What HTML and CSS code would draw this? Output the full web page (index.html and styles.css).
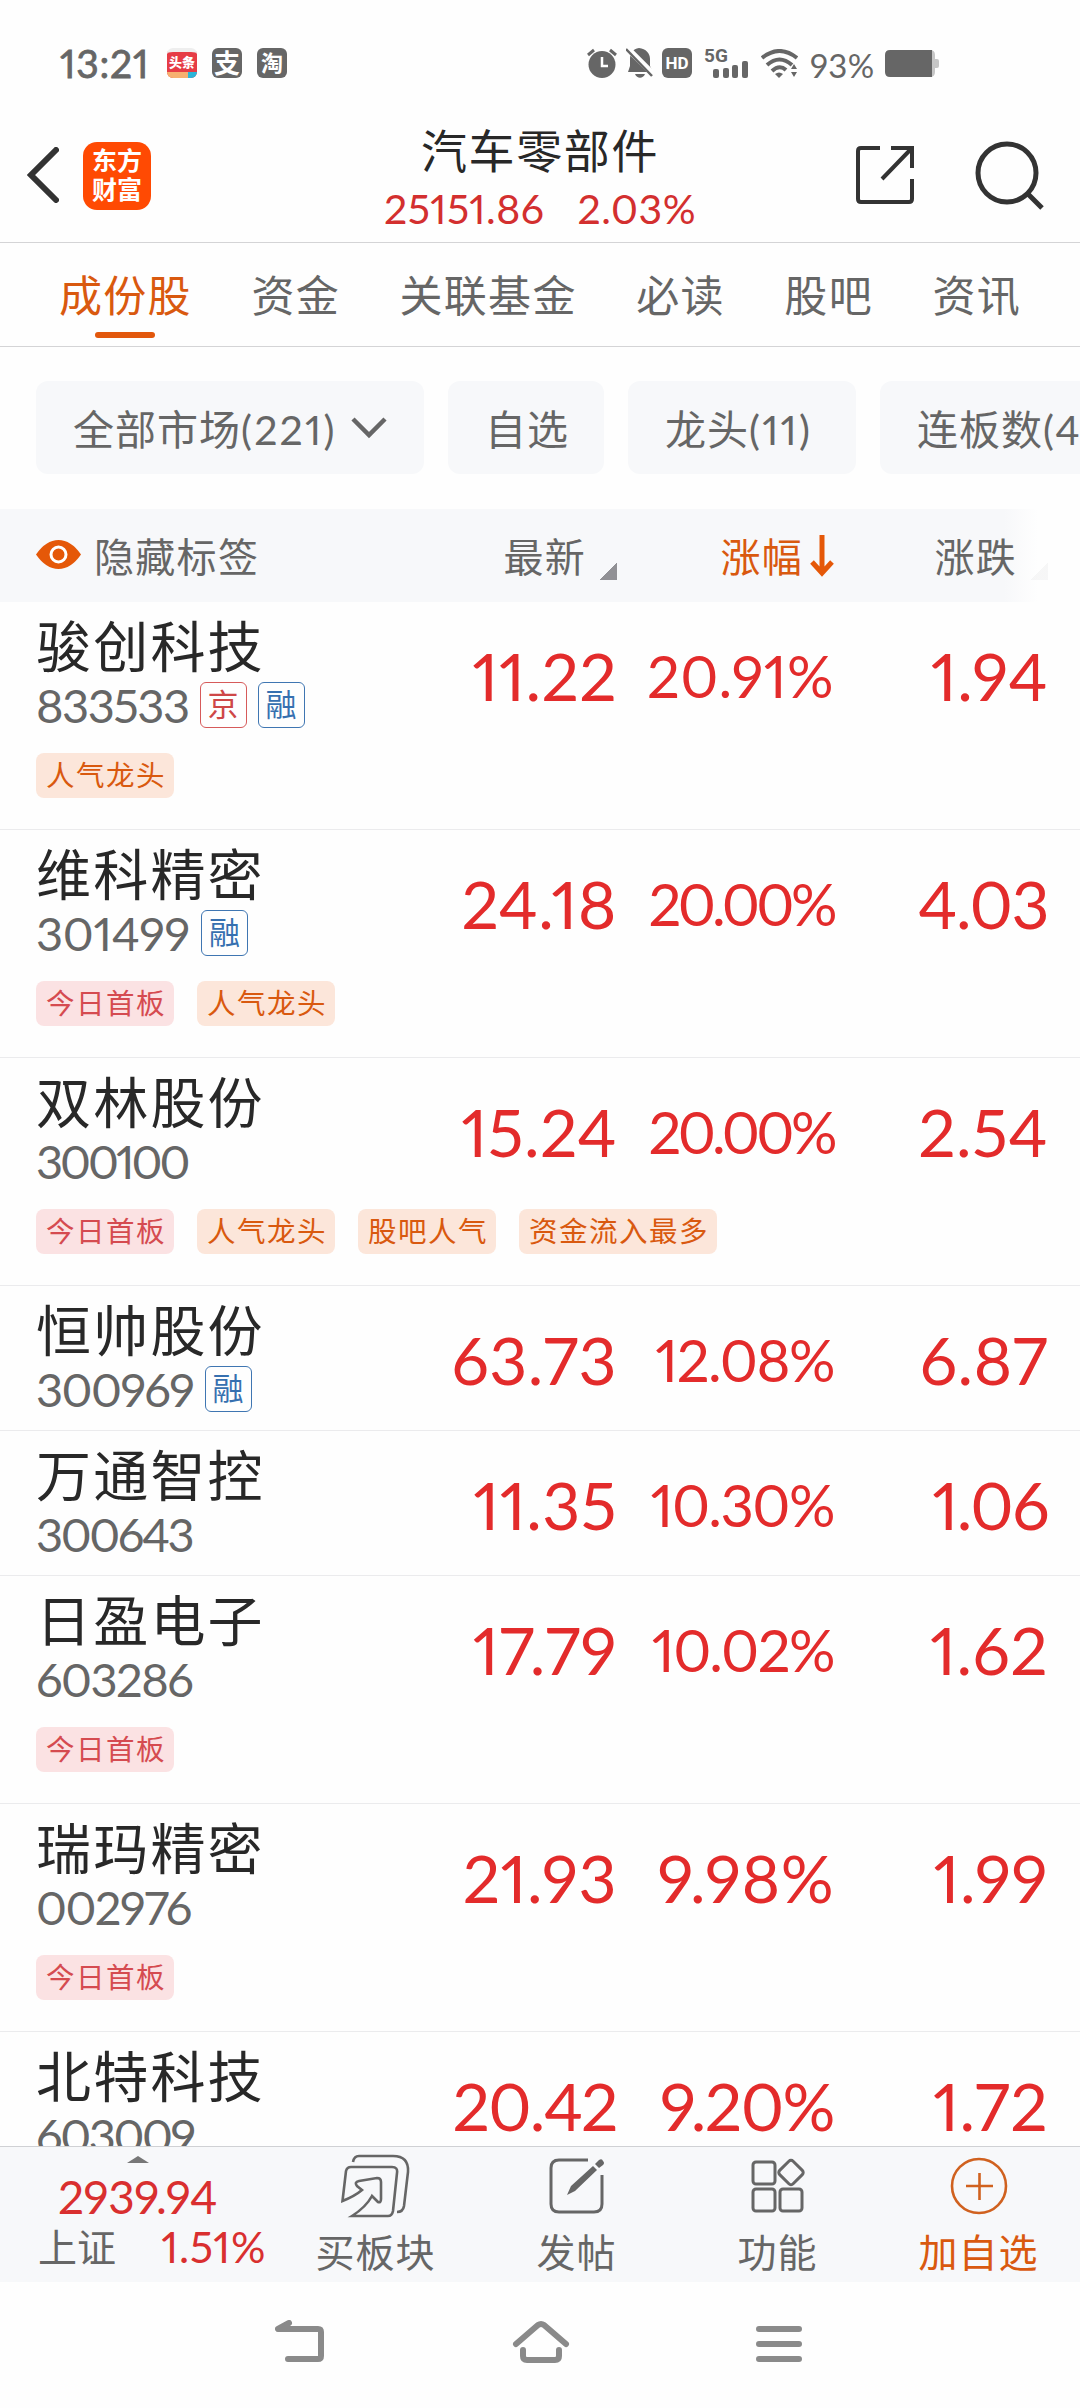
FILE: index.html
```html
<!DOCTYPE html>
<html lang="zh-CN">
<head>
  <meta charset="UTF-8">
  <title>汽车零部件</title>
  <link rel="stylesheet" href="styles.css">
</head>
<body>

  <div class="status-bar">
    <span class="time">13:21</span>
    <span class="app-icon toutiao"><b>头条</b><i></i></span>
    <span class="app-icon">支</span>
    <span class="app-icon small">淘</span>
    <div class="status-right">
      <svg class="alarm" width="30" height="30" viewBox="0 0 30 30">
        <circle cx="15" cy="16.500" r="13.500" fill="#666"/>
        <path d="M1 7L7 2M29 7L23 2" stroke="#666" stroke-width="3"/>
        <path d="M15 9v9h6" fill="none" stroke="#fff" stroke-width="2.500"/>
      </svg>
      <svg class="bell" width="27" height="30" viewBox="0 0 27 30">
        <path d="M13 0c7 1 11 5 11 11v7l3 6H2l2-6v-7C4 5 7 1 13 0zM9 26h10c-2 5-8 5-10 0z" fill="#666"/>
        <path d="M1 0L28 27" stroke="#fff" stroke-width="6"/>
        <path d="M0 1L26 28" stroke="#666" stroke-width="2.500"/>
      </svg>
      <span class="hd">HD</span>
      <div class="signal">
        <span>5G</span>
        <svg width="36" height="17" viewBox="0 0 36 17" fill="#666">
          <rect x="0" y="8" width="6" height="9" rx="2"/>
          <rect x="10" y="7" width="6" height="10" rx="2"/>
          <rect x="19" y="4" width="6" height="13" rx="2"/>
          <rect x="29" y="0" width="6" height="17" rx="2"/>
        </svg>
      </div>
      <svg class="wifi" width="37" height="29" viewBox="0 0 37 29">
        <path d="M1 9Q18.500-5 36 9M6 16Q18.500 5 31 16M11 22Q18.500 15 25 21" fill="none" stroke="#666" stroke-width="4"/>
        <path d="M14 25q4-3 8 0l-4 4zM30 20l3-5 3 5zM30 23h6l-3 5z" fill="#666"/>
      </svg>
      <span class="percent">93%</span>
      <svg class="battery" width="54" height="27" viewBox="0 0 54 27">
        <path d="M44 0h1q5 0 5 5v4h2q2 0 2 2v5q0 2-2 2h-2v4q0 5-5 5h-1z" fill="#c6c6c6"/>
        <path d="M5 0h42v27H5q-5 0-5-5V5q0-5 5-5z" fill="#666"/>
      </svg>
    </div>
  </div>

  <div class="header">
    <svg class="back" width="32" height="56" viewBox="0 0 32 56">
      <path d="M29 3L4 28l25 25" fill="none" stroke="#333" stroke-width="6" stroke-linecap="round"/>
    </svg>
    <div class="logo">东方<br>财富</div>
    <div class="title">
      <h1>汽车零部件</h1>
      <p><span>25151.86</span><span>2.03%</span></p>
    </div>
    <svg class="share" width="58" height="58" viewBox="0 0 58 58" fill="none" stroke="#333" stroke-width="4">
      <path d="M24 2H5Q2 2 2 5v48q0 3 3 3h48q3 0 3-3V33M35 2h21v20M56 2L26 33"/>
    </svg>
    <svg class="search" width="70" height="70" viewBox="0 0 70 70" fill="none" stroke="#333">
      <circle cx="32" cy="32" r="29" stroke-width="5"/>
      <path d="M52 52L67 67" stroke-width="5"/>
    </svg>
  </div>

  <div class="tabs">
    <span class="active">成份股</span>
    <span>资金</span>
    <span>关联基金</span>
    <span>必读</span>
    <span>股吧</span>
    <span>资讯</span>
  </div>

  <div class="filters">
    <div class="filter market">全部市场<em>(221)</em>
      <svg width="36" height="22" viewBox="0 0 36 22"><path d="M2 2l16 16L34 2" fill="none" stroke="#666" stroke-width="4.500"/></svg>
    </div>
    <div class="filter own">自选</div>
    <div class="filter leader">龙头<em>(11)</em></div>
    <div class="filter streak">连板数<em>(4)</em></div>
  </div>

  <div class="row table-head">
    <div class="toggle">
      <svg width="45" height="29" viewBox="0 0 45 29">
        <path d="M0 14.500Q10 0 22.500 0T45 14.500Q35 29 22.500 29T0 14.500z" fill="#e55808"/>
        <circle cx="22.500" cy="14.500" r="7.500" fill="#e55808" stroke="#fff" stroke-width="3"/>
      </svg>
      隐藏标签
    </div>
    <div class="latest">最新<i class="corner"></i></div>
    <div class="sorted">涨幅
      <svg width="24" height="42" viewBox="0 0 24 42"><path d="M12 0v37M2 27l10 11 10-11" fill="none" stroke="#e55808" stroke-width="5"/></svg>
    </div>
    <div class="change">涨跌<i class="corner"></i></div>
  </div>

  <div class="stocks">
    <div class="row stock tagged">
      <div class="info">
        <h2>骏创科技</h2>
        <div class="code">833533<span class="mark red">京</span><span class="mark">融</span></div>
        <div class="tags"><span>人气龙头</span></div>
      </div>
      <div class="num">11.22</div><div class="num long">20.91%</div><div class="num">1.94</div>
    </div>
    <div class="row stock tagged">
      <div class="info">
        <h2>维科精密</h2>
        <div class="code wide">301499<span class="mark">融</span></div>
        <div class="tags"><span class="pink">今日首板</span><span>人气龙头</span></div>
      </div>
      <div class="num">24.18</div><div class="num long tight">20.00%</div><div class="num snug">4.03</div>
    </div>
    <div class="row stock tagged">
      <div class="info">
        <h2>双林股份</h2>
        <div class="code tight">300100</div>
        <div class="tags"><span class="pink">今日首板</span><span>人气龙头</span><span>股吧人气</span><span>资金流入最多</span></div>
      </div>
      <div class="num">15.24</div><div class="num long tight">20.00%</div><div class="num">2.54</div>
    </div>
    <div class="row stock">
      <div class="info">
        <h2>恒帅股份</h2>
        <div class="code">300969<span class="mark">融</span></div>
      </div>
      <div class="num">63.73</div><div class="num long snug">12.08%</div><div class="num">6.87</div>
    </div>
    <div class="row stock">
      <div class="info">
        <h2>万通智控</h2>
        <div class="code snug">300643</div>
      </div>
      <div class="num">11.35</div><div class="num long snug">10.30%</div><div class="num snug">1.06</div>
    </div>
    <div class="row stock tagged">
      <div class="info">
        <h2>日盈电子</h2>
        <div class="code">603286</div>
        <div class="tags"><span class="pink">今日首板</span></div>
      </div>
      <div class="num">17.79</div><div class="num long snug">10.02%</div><div class="num">1.62</div>
    </div>
    <div class="row stock tagged">
      <div class="info">
        <h2>瑞玛精密</h2>
        <div class="code">002976</div>
        <div class="tags"><span class="pink">今日首板</span></div>
      </div>
      <div class="num">21.93</div><div class="num">9.98%</div><div class="num">1.99</div>
    </div>
    <div class="row stock tagged">
      <div class="info">
        <h2>北特科技</h2>
        <div class="code snug">603009</div>
      </div>
      <div class="num snug">20.42</div><div class="num snug">9.20%</div><div class="num">1.72</div>
    </div>
  </div>

  <div class="toolbar">
    <div class="index">
      <i class="up"></i>
      <div class="point">2939.94</div>
      <div class="index-row"><span>上证</span><b>1.51%</b></div>
    </div>
    <div class="tool">
      <svg width="70" height="64" viewBox="0 0 70 64" fill="none" stroke="#666" stroke-width="2.600">
        <path d="M12 8q1-6 6-6h34q16 0 15 16l-4 34q-1 6-7 6"/>
        <path d="M1.500 47L5 17q1-4 5-4h41q6 0 5 6l-4 38q-1 5-5 5H11q14-9 20-20l6 6q3 1 3-3V28q0-4-4-4l-18 3q-5 1-2 5l5 4Q14 42 1.500 47z"/>
      </svg>
      买板块
    </div>
    <div class="tool">
      <svg width="56" height="64" viewBox="0 0 56 64">
        <path d="M39 6H10q-8 0-8 8v36q0 8 8 8h35q8 0 8-8V21" fill="none" stroke="#666" stroke-width="3"/>
        <path d="M18 41l4-9 22-20 4 4-22 21zM46 10l4-4q3-2 4 1 2 2 0 4l-4 3z" fill="#666"/>
      </svg>
      发帖
    </div>
    <div class="tool">
      <svg width="54" height="64" viewBox="0 0 54 64" fill="none" stroke="#666" stroke-width="3">
        <rect x="2" y="8" width="22" height="22" rx="3"/>
        <rect x="2" y="35" width="22" height="22" rx="3"/>
        <rect x="29" y="35" width="22" height="22" rx="3"/>
        <rect x="30.500" y="9" width="19" height="19" rx="3" transform="rotate(45 40 18.500)"/>
      </svg>
      功能
    </div>
    <div class="tool add">
      <svg width="58" height="64" viewBox="0 0 58 64" fill="none" stroke="#d0611f" stroke-width="2.600">
        <circle cx="29" cy="32" r="27"/>
        <path d="M16 32h27M29.500 19v27"/>
      </svg>
      加自选
    </div>
  </div>

  <div class="nav">
    <svg width="50" height="44" viewBox="0 0 50 44" fill="none" stroke="#8a8a8a" stroke-width="6" stroke-linecap="round" stroke-linejoin="round">
      <path d="M14 3L3 9h40q3 0 3 3v24q0 3-3 3H13"/>
    </svg>
    <svg width="58" height="46" viewBox="0 0 58 46" fill="none" stroke="#8a8a8a" stroke-width="6" stroke-linecap="round" stroke-linejoin="round">
      <path d="M4 24L26 5q3-2 6 0l22 19M11 30v6q0 4 4 4h28q4 0 4-4v-6"/>
    </svg>
    <svg width="46" height="44" viewBox="0 0 46 44" stroke="#8a8a8a" stroke-width="6" stroke-linecap="round">
      <path d="M3 9h40M3 24h40M3 39h40"/>
    </svg>
  </div>

</body>
</html>
```
FILE: styles.css
```css
* {
  box-sizing: border-box;
}
body {
  margin: 0;
  width: 1080px;
  height: 2408px;
  overflow: hidden;
  display: flex;
  flex-direction: column;
  font-family: Lato, "Noto Sans CJK SC", sans-serif;
  font-variant-numeric: proportional-nums;
  background: #fefefe;
  color: #666;
}
h1, h2, p {
  margin: 0;
  font-weight: normal;
}
i, em {
  font-style: normal;
}
svg {
  display: block;
  flex: none;
}

/* status bar */
.status-bar {
  height: 108px;
  padding: 18px 141px 0 60px;
  display: flex;
  align-items: center;
}
.time {
  width: 107px;
  font-size: 39px;
  letter-spacing: 0.8px;
  -webkit-text-stroke: 0.8px #666;
}
.app-icon {
  width: 30px;
  height: 30px;
  margin-right: 15px;
  border-radius: 6px;
  background: #666;
  color: #fff;
  font-size: 26px;
  font-weight: bold;
  line-height: 30px;
  text-align: center;
}
.app-icon.small {
  font-size: 22px;
}
.app-icon.toutiao {
  display: flex;
  flex-direction: column;
  background: #e63c46;
  border-top: 4px solid #eee;
}
.toutiao b {
  height: 20px;
  font-size: 13px;
  line-height: 20px;
}
.toutiao i {
  height: 6px;
  border-radius: 0 0 6px 6px;
  background: linear-gradient(90deg, #f6b070 70%, #2bb5d8 70%);
}
.status-right {
  margin-left: auto;
  display: flex;
  align-items: center;
}
.bell {
  margin-left: 9px;
}
.hd {
  width: 30px;
  height: 30px;
  margin-left: 9px;
  border-radius: 6px;
  background: #666;
  color: #fff;
  font: bold 17px/30px Roboto, sans-serif;
  text-align: center;
}
.signal {
  width: 45px;
  height: 30px;
  margin-left: 12px;
  font: bold 19px/15px Roboto, sans-serif;
}
.signal span {
  display: block;
  height: 13px;
}
.signal svg {
  margin-left: 9px;
}
.wifi {
  margin-left: 12px;
}
.percent {
  width: 87px;
  padding: 3px 0 0 12px;
  font-size: 33px;
  letter-spacing: 0.3px;
  white-space: nowrap;
}

/* header */
.header {
  height: 135px;
  padding: 0 34px 0 27px;
  display: flex;
  border-bottom: 1px solid #d4d4d6;
}
.back {
  margin-top: 39px;
}
.logo {
  width: 68px;
  height: 68px;
  margin: 34px 0 0 24px;
  padding-top: 4px;
  border-radius: 14px;
  background: #ff4a03;
  color: #fff;
  font-size: 25px;
  font-weight: bold;
  line-height: 29px;
  text-align: center;
}
.title {
  width: 400px;
  margin-left: 189px;
  text-align: center;
}
.title h1 {
  margin-top: 13px;
  font-size: 46px;
  line-height: 60px;
  letter-spacing: 1.6px;
  color: #282828;
}
.title p {
  display: flex;
  justify-content: center;
  gap: 33px;
  font-size: 41px;
  line-height: 56px;
  letter-spacing: 0.5px;
  color: #d32f2f;
}
.share {
  margin: 38px 0 0 116px;
}
.search {
  margin: 33px 0 0 61px;
}

/* tabs */
.tabs {
  height: 104px;
  padding-left: 59px;
  display: flex;
  gap: 59.5px;
  border-bottom: 1px solid #d4d4d6;
  font-size: 43px;
  line-height: 106px;
  letter-spacing: 1.3px;
}
.tabs .active {
  display: flex;
  flex-direction: column;
  align-items: center;
  color: #d9590f;
}
.tabs .active::after {
  content: "";
  width: 60px;
  height: 6px;
  margin-top: -17px;
  border-radius: 3px;
  background: #e2570c;
}

/* filters */
.filters {
  height: 162px;
  padding: 34px 0 0 36px;
  display: flex;
  gap: 24px;
  white-space: nowrap;
}
.filter {
  flex: none;
  display: flex;
  height: 93px;
  padding-left: 37px;
  border-radius: 12px;
  background: #f7f8fa;
  font-size: 41px;
  line-height: 97px;
  letter-spacing: 1px;
}
.filter em {
  letter-spacing: 2.2px;
}
.filter svg {
  margin: 36px 0 0 14px;
}
.market {
  width: 388px;
}
.own {
  width: 156px;
}
.leader {
  width: 228px;
}
.streak {
  width: 250px;
}

/* stock table */
.row {
  display: grid;
  grid-template-columns: 380px 237px 217px 214px;
}
.table-head {
  flex: none;
  height: 93px;
  background: linear-gradient(90deg, #f7f8fa 1004px, #fefefe 1038px);
  font-size: 40px;
  line-height: 97px;
  letter-spacing: 1.3px;
}
.toggle {
  padding-left: 36px;
  display: flex;
  gap: 13px;
}
.toggle svg {
  margin-top: 31px;
}
.latest, .sorted, .change {
  display: flex;
  justify-content: flex-end;
}
.sorted {
  gap: 7px;
  color: #d9590f;
}
.sorted svg {
  margin-top: 26px;
}
.corner {
  width: 18px;
  height: 18px;
  margin: 53px 0 0 13px;
  background: linear-gradient(135deg, transparent 50%, #919195 50%);
}
.change .corner {
  opacity: 0.07;
}
.stocks {
  flex: none;
  height: 1544px;
  overflow: hidden;
}
.stock {
  height: 145px;
  border-bottom: 1px solid #ebebed;
}
.stock.tagged {
  height: 228px;
}
.info {
  padding: 7px 0 0 36px;
  white-space: nowrap;
}
.info h2 {
  height: 74px;
  font-size: 55px;
  line-height: 74px;
  letter-spacing: 2.2px;
  color: #282828;
}
.code {
  display: flex;
  align-items: center;
  height: 46px;
  margin-top: -1px;
  font-size: 47px;
  letter-spacing: -1.5px;
}
.code.wide {
  letter-spacing: -0.3px;
}
.code.snug {
  letter-spacing: -2.4px;
}
.code.tight {
  letter-spacing: -3px;
}
.mark {
  width: 47px;
  height: 46px;
  margin-left: 11px;
  border: 1.5px solid #3f76b2;
  border-radius: 6px;
  color: #3670b0;
  font-size: 31px;
  line-height: 43px;
  letter-spacing: 0;
  text-align: center;
}
.mark.red {
  border-color: #d65a5a;
  color: #ce4747;
}
.tags {
  display: flex;
  gap: 23px;
  margin-top: 25px;
}
.tags span {
  height: 45px;
  padding: 0 8px 0 10px;
  border-radius: 8px;
  background: #fce6da;
  color: #d9590f;
  font-size: 28.5px;
  line-height: 45px;
  letter-spacing: 1.5px;
}
.tags .pink {
  background: #fbe2e3;
  color: #d54b50;
}

.num {
  padding-top: 34px;
  font-size: 66px;
  line-height: 80px;
  letter-spacing: 0.4px;
  text-align: right;
  color: #e32b2b;
}
.num.long {
  font-size: 58px;
}
.num.snug {
  letter-spacing: -1.5px;
}
.num.tight {
  letter-spacing: -3.5px;
}

/* bottom toolbar */
.toolbar {
  flex: none;
  height: 136px;
  display: flex;
  border-top: 1px solid #d0d1d4;
  background: #f7f8fa;
}
.index {
  width: 275px;
  padding-top: 9px;
}
.up {
  display: block;
  width: 22px;
  height: 7px;
  margin-left: 127px;
  background: #777;
  clip-path: polygon(50% 0, 100% 100%, 0 100%);
}
.point {
  height: 60px;
  margin-top: 4px;
  font-size: 46px;
  line-height: 60px;
  letter-spacing: -0.5px;
  text-align: center;
  color: #d92f2f;
}
.index-row {
  display: flex;
  justify-content: space-between;
  padding: 0 9px 0 38px;
  font-size: 39px;
  line-height: 40px;
}
.index-row b {
  font-size: 43px;
  font-weight: normal;
  letter-spacing: 0.6px;
  color: #d92f2f;
}
.tool {
  width: 201px;
  padding-top: 7px;
  display: flex;
  flex-direction: column;
  align-items: center;
  font-size: 39px;
  line-height: 68px;
  letter-spacing: 1px;
}
.tool.add {
  color: #d9590f;
}

/* system navigation */
.nav {
  flex: none;
  height: 126px;
  padding: 38px 278px 0 275px;
  display: flex;
  justify-content: space-between;
}
```
